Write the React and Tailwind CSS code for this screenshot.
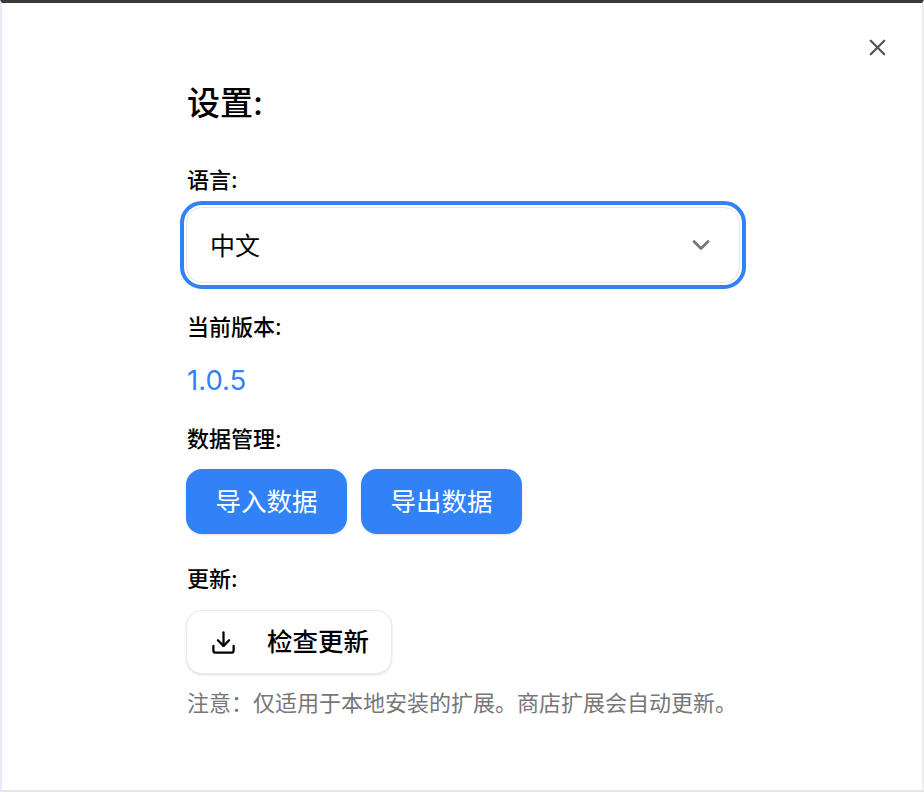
import React from 'react';
import { ChevronDown, Download, X } from 'lucide-react';

const App = () => {
  return (
    <div className="h-[792px] w-[924px] overflow-hidden bg-white font-['Inter','Noto_Sans_CJK_SC',sans-serif] text-black">
      <div className="relative flex h-full flex-col border-t-[3px] border-r-2 border-b-2 border-l-2 border-t-[#3a3a3a] border-r-[#eeeeee] border-b-[#e5e5e5] border-l-[#e8e8f8] pl-[185px]">
        {/* Close */}
        <button className="absolute top-[31px] right-[31px] text-[#555555]">
          <X className="h-[27px] w-[27px]" strokeWidth={2} />
        </button>

        <h2 className="mt-[79px] text-[33px] leading-[42px] font-medium">设置:</h2>

        {/* Language */}
        <div className="mt-[41px] text-[22px] leading-[30px] font-medium">语言:</div>
        <div className="mt-[12px] ml-[-1px] flex h-[76px] w-[554px] items-center justify-between rounded-[16px] border border-[#e5e5e5] bg-white pr-[24px] pl-[23px] outline-[4px] outline-offset-[2px] outline-[#3182f6]">
          <span className="pt-[2px] text-[25px] leading-none">中文</span>
          <ChevronDown className="h-[28px] w-[28px] text-[#777777]" strokeWidth={2.4} />
        </div>

        {/* Version */}
        <div className="mt-[29px] text-[22px] leading-[30px] font-medium">当前版本:</div>
        <div className="mt-[21px] text-[27.5px] leading-[34px] text-[#3182f6]">1.0.5</div>

        {/* Data */}
        <div className="mt-[27px] text-[22px] leading-[30px] font-medium">数据管理:</div>
        <div className="mt-[15px] ml-[-1px] flex gap-[14px]">
          <button className="flex h-[65px] w-[161px] items-center justify-center rounded-[16px] bg-[#3182f6] pt-[2px] text-[25.5px] font-normal text-white shadow-sm">导入数据</button>
          <button className="flex h-[65px] w-[161px] items-center justify-center rounded-[16px] bg-[#3182f6] pt-[2px] text-[25.5px] font-normal text-white shadow-sm">导出数据</button>
        </div>

        {/* Update */}
        <div className="mt-[30px] text-[22px] leading-[30px] font-medium">更新:</div>
        <button className="mt-[16px] ml-[-1px] flex h-[64px] w-[206px] items-center rounded-[16px] border border-[#ebebeb] bg-white pl-[23px] shadow-sm">
          <Download className="h-[27px] w-[27px]" strokeWidth={2} />
          <span className="ml-[30px] text-[25.5px] font-medium">检查更新</span>
        </button>
        <p className="mt-[13px] text-[22px] leading-[32px] text-[#777777]">注意：仅适用于本地安装的扩展。商店扩展会自动更新。</p>
      </div>
    </div>
  );
};

export default App;
